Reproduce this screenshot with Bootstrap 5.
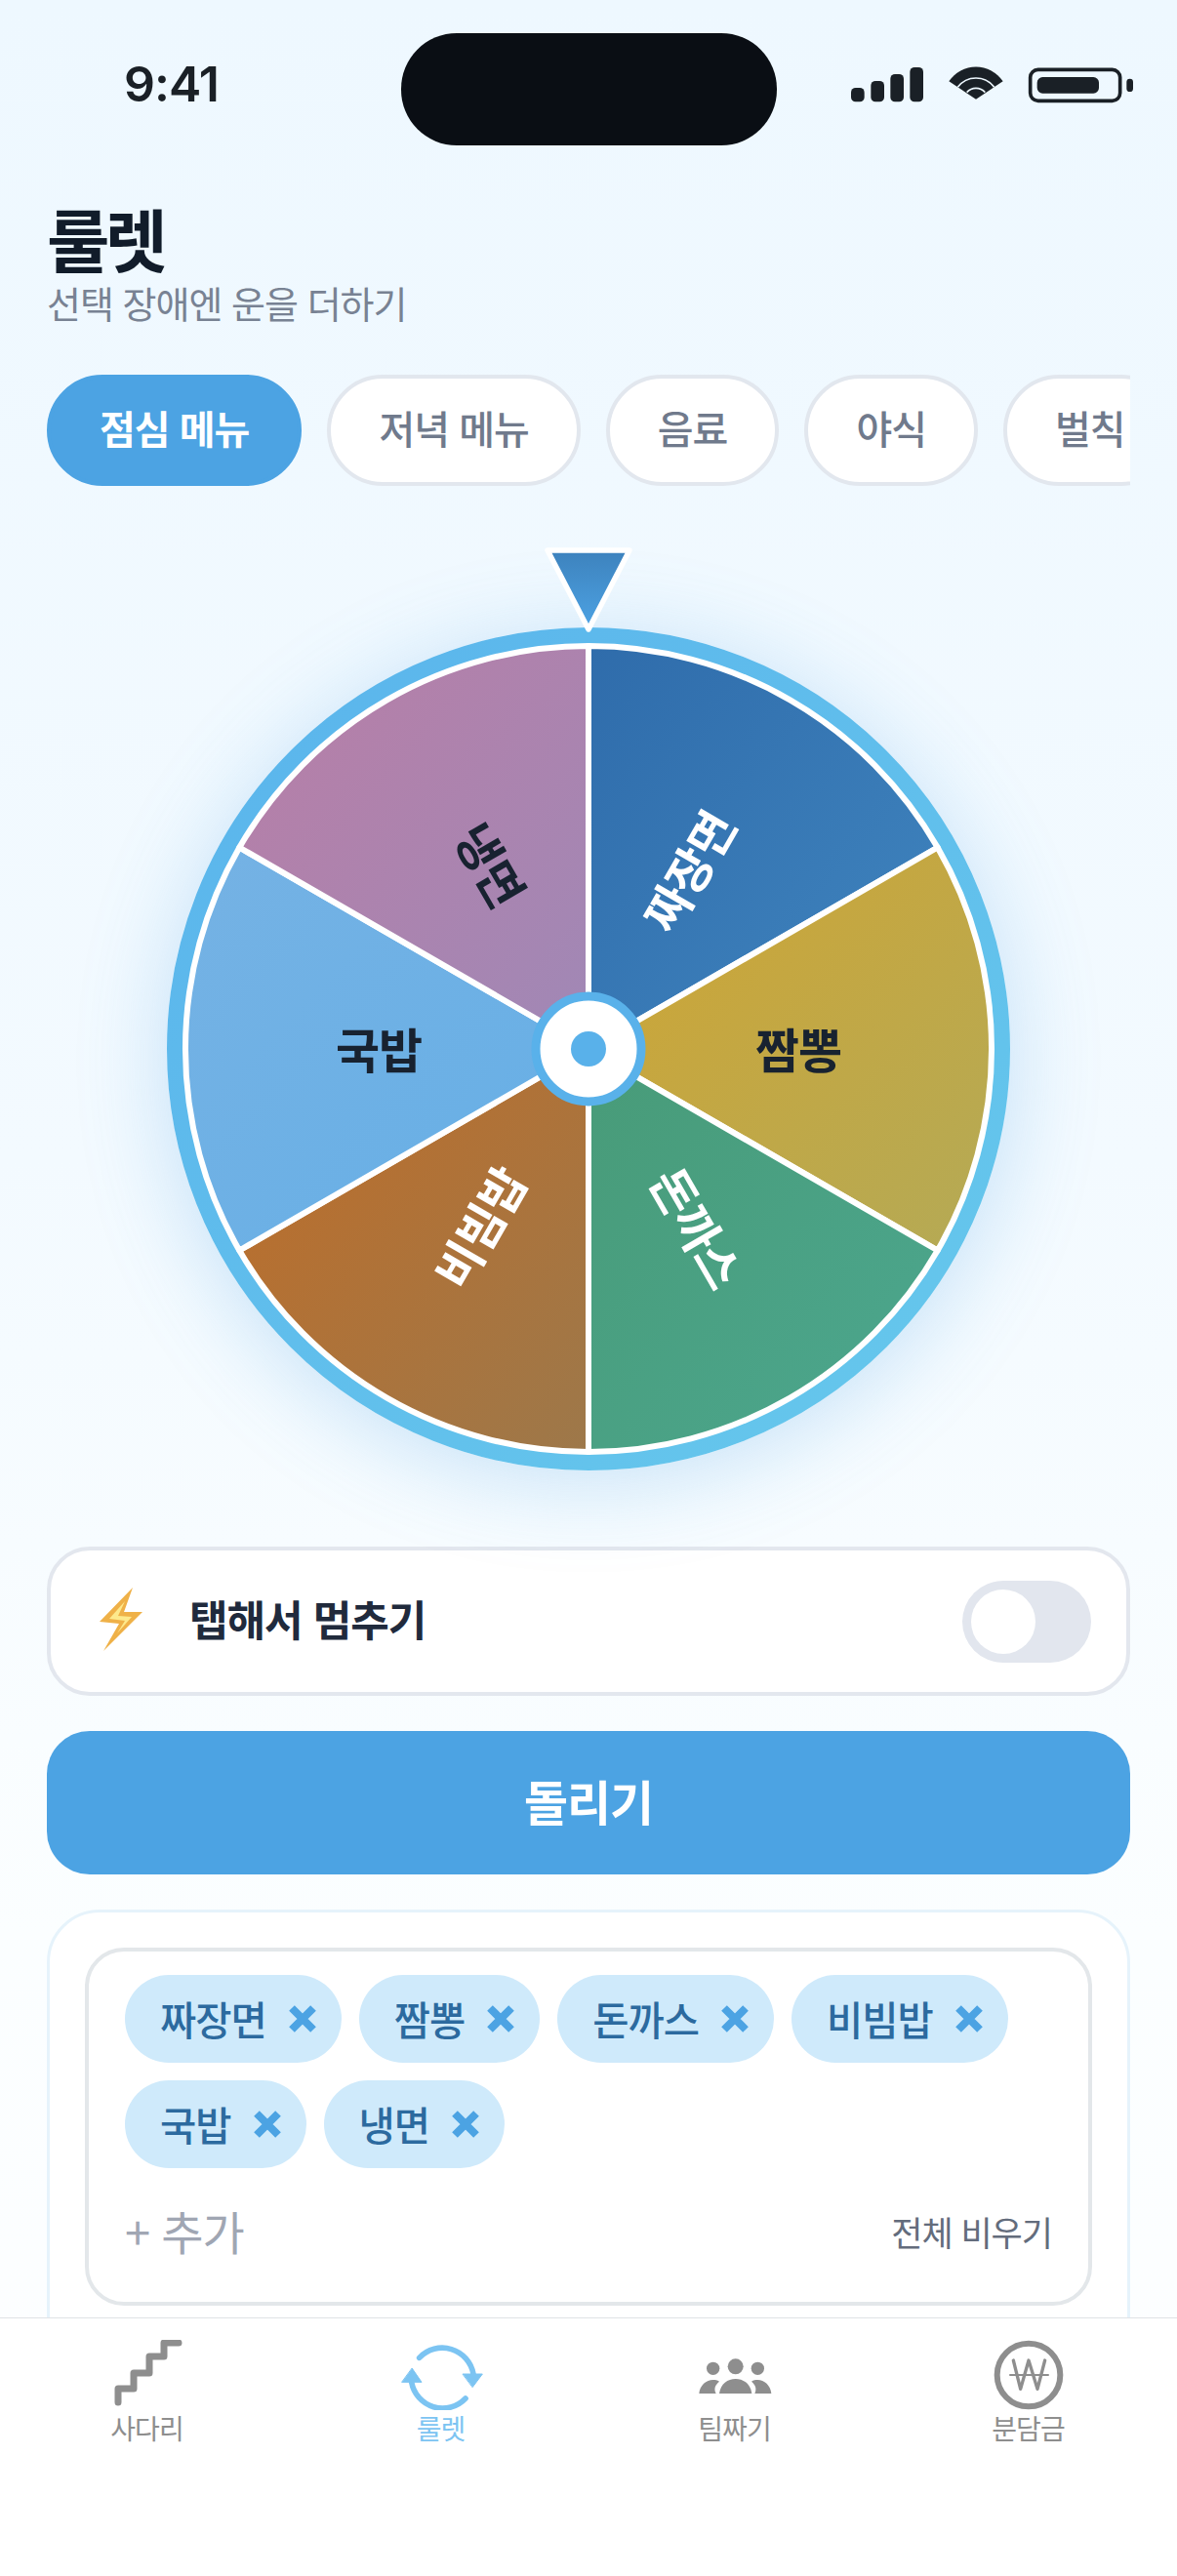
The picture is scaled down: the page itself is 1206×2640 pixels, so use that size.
<!DOCTYPE html>
<html lang="ko">
<head>
<meta charset="UTF-8" />
<meta name="viewport" content="width=device-width, initial-scale=1.0" />
<title>룰렛</title>
<link href="https://cdn.jsdelivr.net/npm/bootstrap@5.3.0/dist/css/bootstrap.min.css" rel="stylesheet" />
<style>
  html, body { height: 2640px; }
  body {
    width: 1206px; overflow: hidden; position: relative;
    font-family: "Noto Sans CJK KR", "Noto Sans", sans-serif;
    background: linear-gradient(180deg, #eef8ff 0%, #f3faff 45%, #fbfeff 75%, #fdfeff 100%);
  }
  .status-strip { height: 148px; padding-top: 34px; }
  .clock { width: 411px; padding-left: 127px; font: 600 50px/1 Inter, sans-serif; letter-spacing: -1px; color: #1a2026; padding-top: 27px; }
  .island { width: 385px; height: 115px; border-radius: 57px; background: #0a0e14; }
  .status-icons { margin-left: 44px; margin-top: 6px; display: block; }
  .page-head { padding: 59px 48px 0; }
  .page-title { font-size: 70px; line-height: 74px; font-weight: 700; color: #111c2a; letter-spacing: -5px; margin: 0; }
  .page-sub { font-size: 38px; line-height: 48px; color: #788293; letter-spacing: -1px; margin: 5px 0 0; }
  .chip-row { margin: 50px 48px 0; overflow: hidden; gap: 26px; }
  .tab-chip {
    flex: none; height: 114px; padding: 0 49px 7px; border-radius: 57px; background: #fff;
    border: 4px solid #e2e7ee; color: #707a8c; font-size: 40px; font-weight: 500; letter-spacing: -1px;
    display: flex; align-items: center;
  }
  .tab-chip.is-on { background: #4ca3e3; border-color: #4ca3e3; color: #fff; font-weight: 600; padding-left: 50px; padding-right: 50px; }
  .wheel-zone { height: 1087px; padding-top: 145px; }
  .wheel-wrap { width: 864px; height: 864px; border-radius: 50%; position: relative; box-shadow: 0 12px 90px rgba(76,163,227,.28); }
  .wheel-wrap > svg { display: block; }
  .wheel-pin { position: absolute; left: 385px; top: -82px; }
  .wheel-label { font-family: "Noto Sans CJK KR", sans-serif; font-size: 49px; font-weight: 600; text-anchor: middle; dominant-baseline: central; letter-spacing: -1px; }
  .stop-card {
    margin: 0 48px; height: 153px; padding: 0 36px 0 47px; background: #fff;
    border: 4px solid #e3e7ee; border-radius: 44px; gap: 45px;
  }
  .stop-card > svg { margin-bottom: 6px; }
  .stop-text { font-size: 43px; font-weight: 700; color: #202a3c; letter-spacing: -1px; margin-bottom: 6px; }
  .fake-switch { width: 132px; height: 84px; background: #e2e6ee; border-radius: 42px; padding: 9px; margin-left: auto; }
  .fake-knob { width: 66px; height: 66px; background: #fff; border-radius: 50%; }
  .spin-btn {
    display: block; width: 1110px; height: 147px; margin: 36px 48px 0; padding: 0 0 5px; border: 0; border-radius: 44px;
    background: #4ca3e3; color: #fff; font-size: 49px; font-weight: 600; letter-spacing: -1px;
  }
  .item-card {
    margin: 36px 48px 0; height: 480px; padding: 36px 36px 0; background: #fff;
    border: 3px solid #e6f3fb; border-radius: 54px;
  }
  .item-box { height: 367px; border: 4px solid #e3e7ea; border-radius: 40px; padding: 24px 37px 0; }
  .item-wrap { gap: 18px; }
  .item-pill {
    height: 90px; padding: 0 25px 0 36px; border-radius: 45px; background: #cfeafb; color: #2c6a9f;
    font-size: 40.5px; font-weight: 500; letter-spacing: -1px; gap: 22px;
  }
  .add-row { margin-top: 34px; }
  .add-text { font-size: 47px; color: #a0a6b3; line-height: 60px; letter-spacing: -1px; margin-bottom: 2px; }
  .clear-text { font-size: 35px; color: #636c7c; line-height: 60px; letter-spacing: -1px; }
  .tab-bar {
    position: absolute; left: 0; right: 0; top: 2375px; bottom: 0; background: #fff; border-top: 1px solid #dfe2e6;
  }
  .tab-item { width: 301px; padding-top: 22px; color: #8e8e8e; font-size: 28px; line-height: 36px; letter-spacing: -1px; }
  .tab-item.is-on { color: #7cc4f2; }
  .tab-art { display: block; height: 72px; }
</style>
</head>
<body>
  <div class="status-strip d-flex">
    <div class="clock">9:41</div>
    <div class="island"></div>
    <svg class="status-icons" width="340" height="90" viewBox="0 0 1020 270" fill="#1a2026">
      <rect x="96" y="150" width="41" height="43" rx="14"/>
      <rect x="157" y="129" width="41" height="64" rx="14"/>
      <rect x="217" y="108" width="41" height="85" rx="14"/>
      <rect x="277" y="87" width="41" height="106" rx="14"/>
      <path d="M480 185 L397 130 A100 100 0 0 1 563 130 Z"/>
      <path d="M424 148 A70 70 0 0 1 536 148 M452 164 A37 37 0 0 1 508 164" fill="none" stroke="#eef8ff" stroke-width="5"/>
      <rect x="647" y="94" width="276" height="96" rx="24" fill="none" stroke="#1a2026" stroke-width="11"/>
      <rect x="668" y="117" width="190" height="50" rx="17"/>
      <rect x="943" y="122" width="20" height="40" rx="10"/>
    </svg>
  </div>

  <div class="page-head">
    <h1 class="page-title">룰렛</h1>
    <p class="page-sub">선택 장애엔 운을 더하기</p>
  </div>

  <div class="chip-row d-flex">
    <div class="tab-chip is-on">점심 메뉴</div>
    <div class="tab-chip">저녁 메뉴</div>
    <div class="tab-chip">음료</div>
    <div class="tab-chip">야식</div>
    <div class="tab-chip">벌칙</div>
  </div>

  <div class="wheel-zone d-flex justify-content-center">
    <div class="wheel-wrap">
      <svg width="864" height="864" viewBox="-432 -432 864 864">
        <defs>
          <linearGradient id="ringGrad" x1="0" y1="0" x2="1" y2="1"><stop offset="0" stop-color="#5ab4ec"/><stop offset="1" stop-color="#66c8ec"/></linearGradient>
          <linearGradient id="s1" x1="0" y1="0" x2="1" y2="1"><stop offset="0" stop-color="#2f6cab"/><stop offset="1" stop-color="#4085bf"/></linearGradient>
          <linearGradient id="s2" x1="0" y1="0" x2="1" y2="1"><stop offset="0" stop-color="#d0a533"/><stop offset="1" stop-color="#b4aa56"/></linearGradient>
          <linearGradient id="s3" x1="0" y1="0" x2="1" y2="1"><stop offset="0" stop-color="#489b78"/><stop offset="1" stop-color="#4ca78f"/></linearGradient>
          <linearGradient id="s4" x1="0" y1="0" x2="1" y2="1"><stop offset="0" stop-color="#bf6d28"/><stop offset="1" stop-color="#9d784a"/></linearGradient>
          <linearGradient id="s5" x1="0" y1="0" x2="1" y2="1"><stop offset="0" stop-color="#75b2e4"/><stop offset="1" stop-color="#66afe6"/></linearGradient>
          <linearGradient id="s6" x1="0" y1="0" x2="1" y2="1"><stop offset="0" stop-color="#b97ea6"/><stop offset="1" stop-color="#a088b6"/></linearGradient>
        </defs>
        <circle r="423" fill="#fff" stroke="url(#ringGrad)" stroke-width="18"/>
        <g stroke="#fff" stroke-width="6" stroke-linejoin="round">
          <path d="M0 0 L0 -413 A413 413 0 0 1 357.7 -206.5 Z" fill="url(#s1)"/>
          <path d="M0 0 L357.7 -206.5 A413 413 0 0 1 357.7 206.5 Z" fill="url(#s2)"/>
          <path d="M0 0 L357.7 206.5 A413 413 0 0 1 0 413 Z" fill="url(#s3)"/>
          <path d="M0 0 L0 413 A413 413 0 0 1 -357.7 206.5 Z" fill="url(#s4)"/>
          <path d="M0 0 L-357.7 206.5 A413 413 0 0 1 -357.7 -206.5 Z" fill="url(#s5)"/>
          <path d="M0 0 L-357.7 -206.5 A413 413 0 0 1 0 -413 Z" fill="url(#s6)"/>
        </g>
        <text class="wheel-label" fill="#fff" transform="translate(101 -183) rotate(-60)" letter-spacing="-3">짜장면</text>
        <text class="wheel-label" fill="#182230" transform="translate(215 -2)">짬뽕</text>
        <text class="wheel-label" fill="#fff" transform="translate(113 182) rotate(60)">돈까스</text>
        <text class="wheel-label" fill="#fff" transform="translate(-113 182) rotate(-60)">비빔밥</text>
        <text class="wheel-label" fill="#182230" transform="translate(-215 -2)">국밥</text>
        <text class="wheel-label" fill="#182230" transform="translate(-99 -190) rotate(60)">냉면</text>
        <circle r="54" fill="#fff" stroke="#59b1ea" stroke-width="9"/>
        <circle r="18" fill="#59b1ea"/>
      </svg>
      <svg class="wheel-pin" width="94" height="90" viewBox="0 0 94 90">
        <defs><linearGradient id="pinGrad" x1="0" y1="0" x2="0" y2="1"><stop offset="0" stop-color="#3d82bd"/><stop offset="1" stop-color="#4da3e4"/></linearGradient></defs>
        <path d="M5 3 H89 L47 84 Z" fill="url(#pinGrad)" stroke="#fff" stroke-width="5.5" stroke-linejoin="round"/>
      </svg>
    </div>
  </div>

  <div class="stop-card d-flex align-items-center">
    <svg width="50" height="70" viewBox="0 0 50 70">
      <path d="M37 3 L3 38 L23 40 L7 68 L47 28 L28 28 Z" fill="#efb148"/>
      <path d="M29 17 L13 35 L29 37 L21 50 L36 33 L22 32 Z" fill="#fde98c"/>
    </svg>
    <span class="stop-text">탭해서 멈추기</span>
    <div class="fake-switch"><div class="fake-knob"></div></div>
  </div>

  <button class="spin-btn" type="button">돌리기</button>

  <div class="item-card">
    <div class="item-box">
      <div class="item-wrap d-flex flex-wrap">
        <div class="item-pill d-flex align-items-center">짜장면<svg width="30" height="30" viewBox="0 0 30 30"><path d="M4 4 L26 26 M26 4 L4 26" stroke="#4ca3e3" stroke-width="8"/></svg></div>
        <div class="item-pill d-flex align-items-center">짬뽕<svg width="30" height="30" viewBox="0 0 30 30"><path d="M4 4 L26 26 M26 4 L4 26" stroke="#4ca3e3" stroke-width="8"/></svg></div>
        <div class="item-pill d-flex align-items-center">돈까스<svg width="30" height="30" viewBox="0 0 30 30"><path d="M4 4 L26 26 M26 4 L4 26" stroke="#4ca3e3" stroke-width="8"/></svg></div>
        <div class="item-pill d-flex align-items-center">비빔밥<svg width="30" height="30" viewBox="0 0 30 30"><path d="M4 4 L26 26 M26 4 L4 26" stroke="#4ca3e3" stroke-width="8"/></svg></div>
        <div class="item-pill d-flex align-items-center">국밥<svg width="30" height="30" viewBox="0 0 30 30"><path d="M4 4 L26 26 M26 4 L4 26" stroke="#4ca3e3" stroke-width="8"/></svg></div>
        <div class="item-pill d-flex align-items-center">냉면<svg width="30" height="30" viewBox="0 0 30 30"><path d="M4 4 L26 26 M26 4 L4 26" stroke="#4ca3e3" stroke-width="8"/></svg></div>
      </div>
      <div class="add-row d-flex justify-content-between align-items-center">
        <span class="add-text">+ 추가</span>
        <span class="clear-text">전체 비우기</span>
      </div>
    </div>
  </div>

  <nav class="tab-bar d-flex">
    <div class="tab-item d-flex flex-column align-items-center">
      <svg class="tab-art" width="72" height="72" viewBox="0 0 72 72" fill="none" stroke="#8e8e8e" stroke-width="7" stroke-linecap="round" stroke-linejoin="round">
        <path d="M6 64 V50 H22 V34 H38 V17 H53 V3 H68"/>
      </svg>
      <span>사다리</span>
    </div>
    <div class="tab-item is-on d-flex flex-column align-items-center">
      <svg class="tab-art" width="90" height="72" viewBox="950 40 270 216" fill="none" stroke="#7cc4f2" stroke-width="17" stroke-linecap="round">
        <path d="M1018 95 A97 97 0 0 1 1184 145"/>
        <path d="M1160 220 A97 97 0 0 1 994 170"/>
        <path d="M1152 145 H1212 L1182 185 Z M965 170 H1025 L996 128 Z" fill="#7cc4f2" stroke-width="3" stroke-linejoin="round"/>
      </svg>
      <span>룰렛</span>
    </div>
    <div class="tab-item d-flex flex-column align-items-center">
      <svg class="tab-art" width="80" height="72" viewBox="100 40 240 216" fill="#8e8e8e">
        <circle cx="153" cy="128" r="20"/><circle cx="222" cy="122" r="24"/><circle cx="290" cy="128" r="20"/>
        <path d="M172 205 C176 175 198 160 222 160 C246 160 268 175 272 205 Z"/>
        <path d="M110 205 C112 180 132 163 153 163 C160 163 166 164 172 168 C160 178 154 190 162 205 Z"/>
        <path d="M332 205 C330 180 310 163 290 163 C283 163 277 164 271 168 C283 178 288 190 281 205 Z"/>
      </svg>
      <span>팀짜기</span>
    </div>
    <div class="tab-item d-flex flex-column align-items-center">
      <svg class="tab-art" width="72" height="72" viewBox="1017 47 216 216" fill="none" stroke="#8e8e8e" stroke-linecap="round" stroke-linejoin="round">
        <circle cx="1125" cy="155" r="97" stroke-width="18"/>
        <path d="M1078 110 L1100 198 L1125 110 L1152 198 L1175 110" stroke-width="10"/>
        <path d="M1068 155 H1185" stroke-width="6"/>
      </svg>
      <span>분담금</span>
    </div>
  </nav>

  <script src="https://cdn.jsdelivr.net/npm/bootstrap@5.3.0/dist/js/bootstrap.bundle.min.js"></script>
</body>
</html>
